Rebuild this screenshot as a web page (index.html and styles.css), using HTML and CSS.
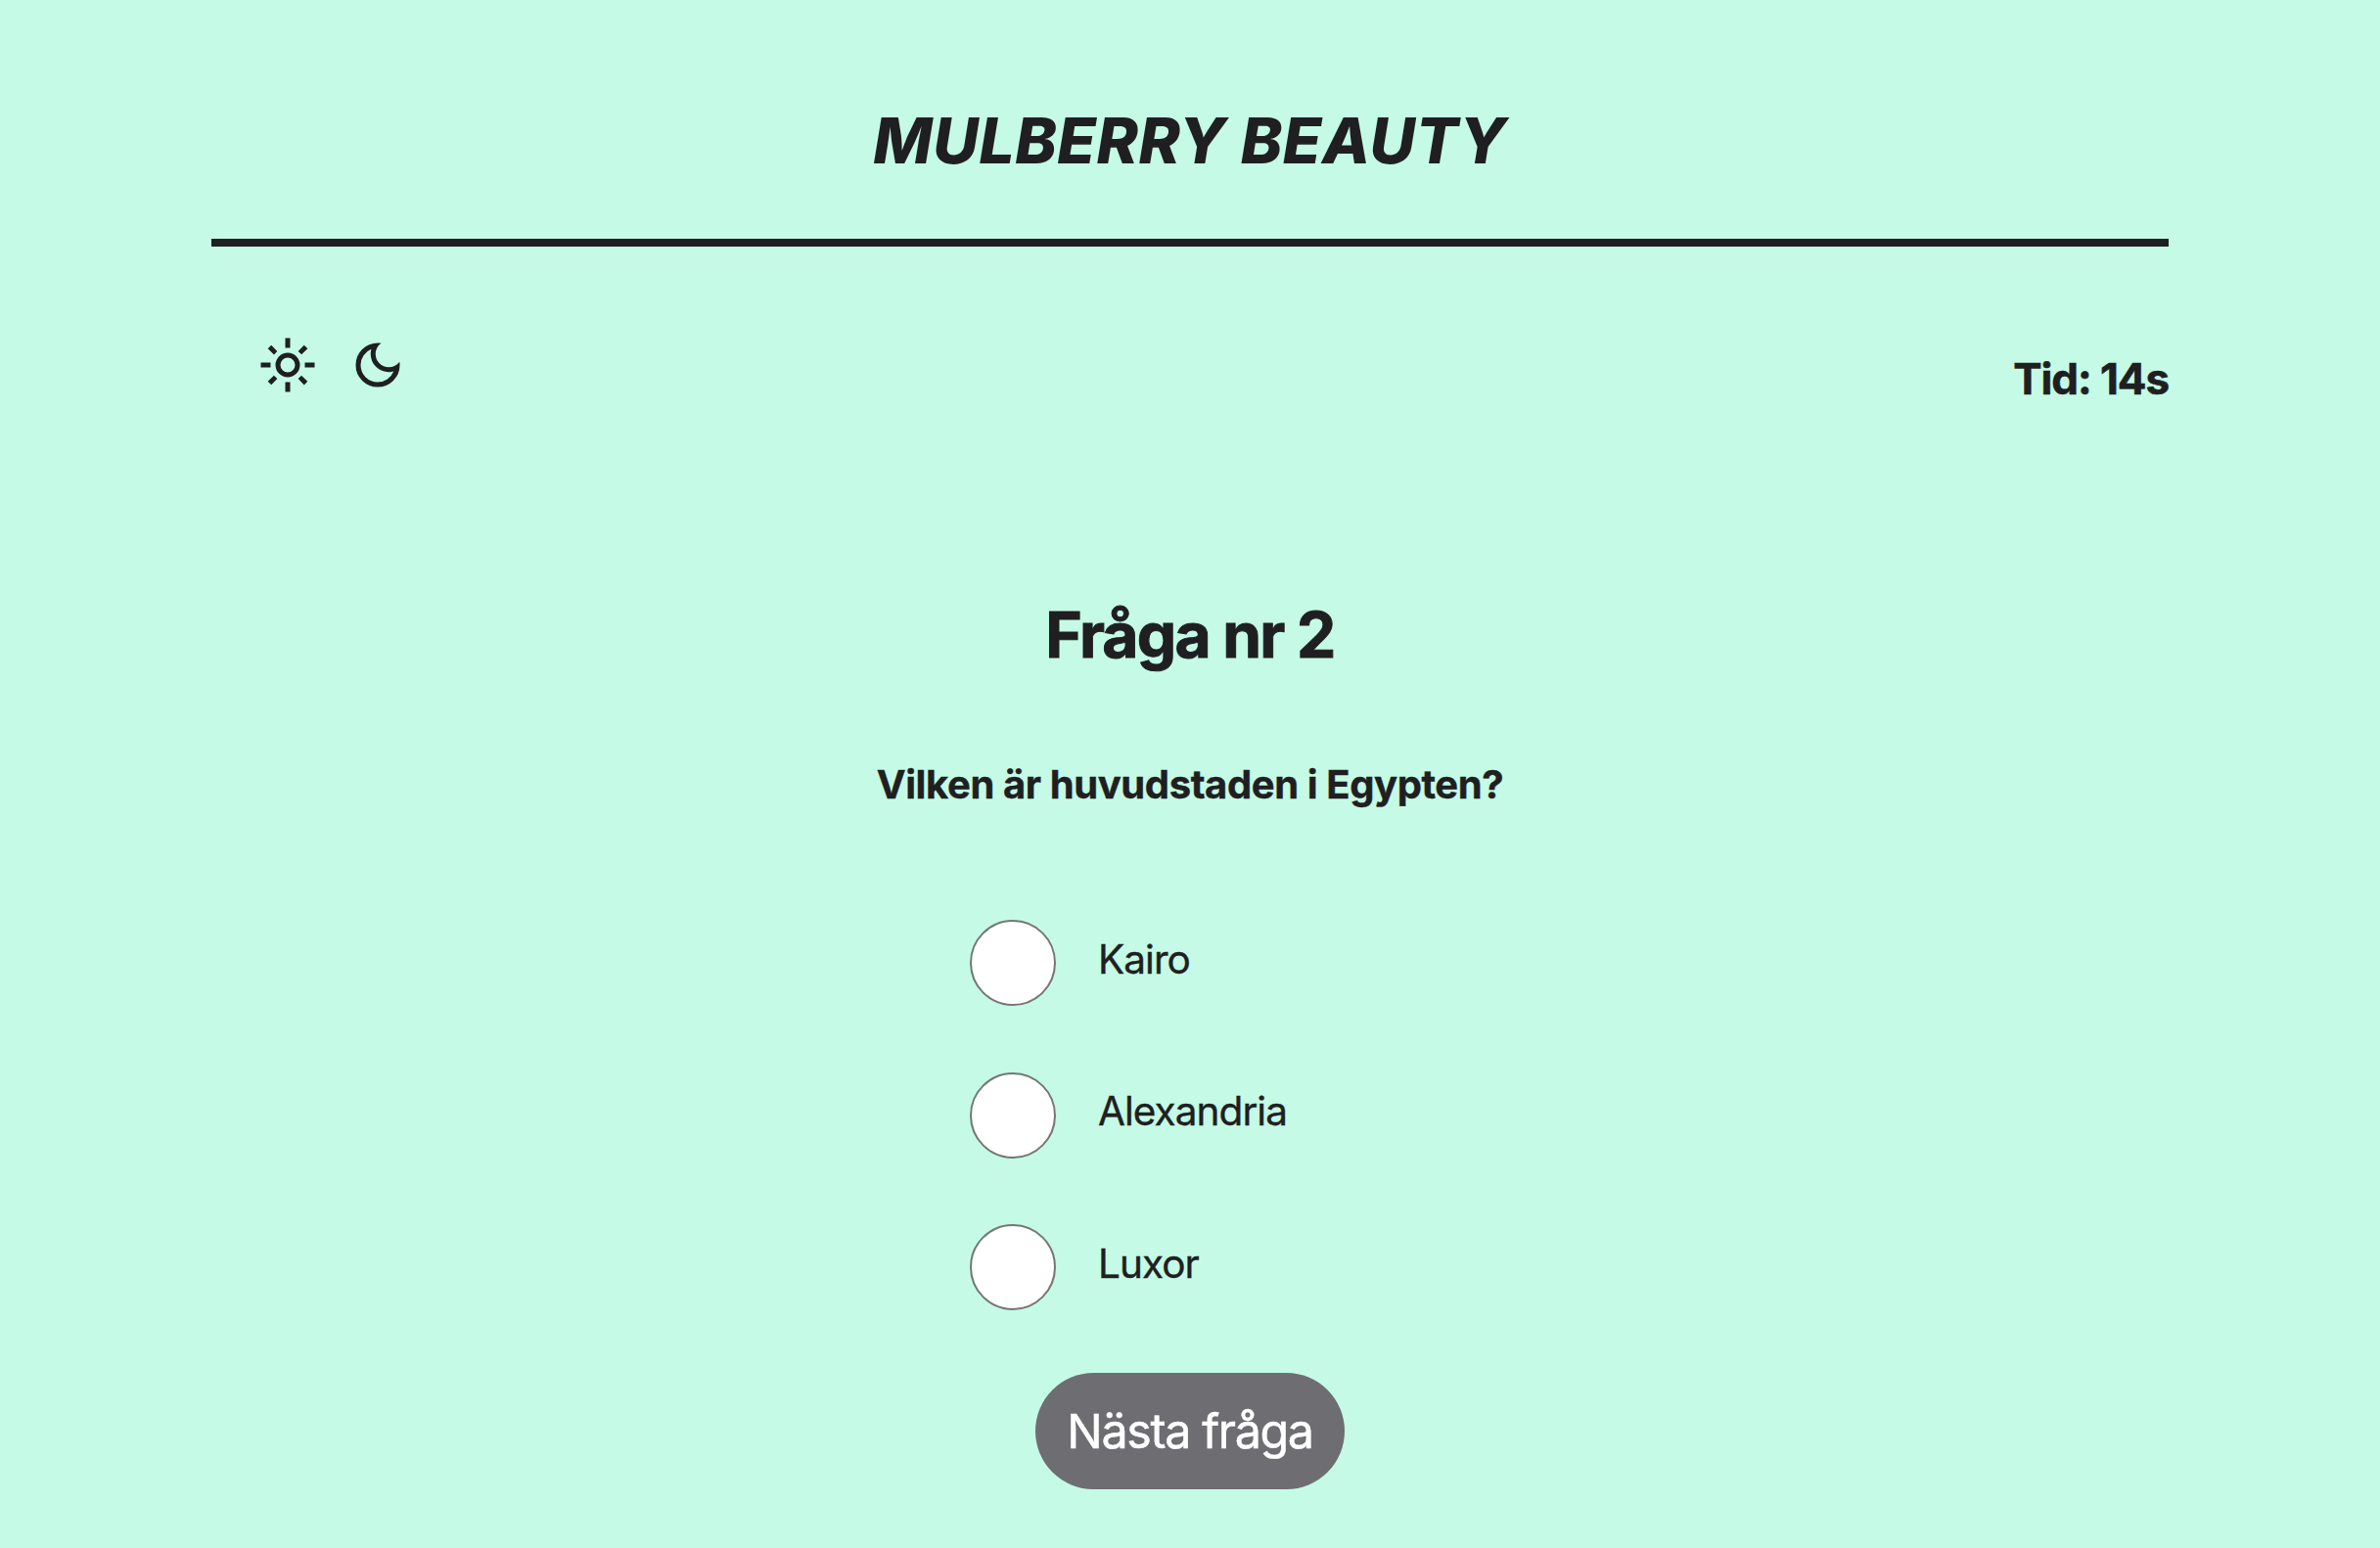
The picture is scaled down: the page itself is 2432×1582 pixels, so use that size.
FILE: index.html
```html
<!DOCTYPE html>
<html lang="sv">
<head>
<meta charset="utf-8">
<title>Mulberry Beauty</title>
<link rel="stylesheet" href="styles.css">
</head>
<body>
<header class="header">
  <h1 class="logo">MULBERRY BEAUTY</h1>
</header>
<main class="main">
  <div class="toolbar">
    <div class="themes">
      <svg class="icon" viewBox="0 0 24 24" role="img" aria-label="Ljust läge"><path d="M12 15q1.25 0 2.125-.875T15 12q0-1.25-.875-2.125T12 9q-1.25 0-2.125.875T9 12q0 1.25.875 2.125T12 15Zm0 2q-2.075 0-3.538-1.463Q7 14.075 7 12t1.462-3.538Q9.925 7 12 7t3.538 1.462Q17 9.925 17 12q0 2.075-1.462 3.537Q14.075 17 12 17ZM1 13v-2h4v2Zm18 0v-2h4v2ZM11 5V1h2v4Zm0 18v-4h2v4ZM6.4 7.75 3.875 5.325 5.3 3.85 7.7 6.35Zm12.3 12.4-2.425-2.525L17.6 16.25l2.525 2.425ZM16.25 6.4l2.425-2.525L20.15 5.3 17.65 7.7ZM3.85 18.7l2.525-2.425L7.75 17.6l-2.425 2.525Z"/></svg>
      <svg class="icon" viewBox="0 0 24 24" role="img" aria-label="Mörkt läge"><path d="M12 21q-3.75 0-6.375-2.625T3 12q0-3.75 2.625-6.375T12 3q.35 0 .688.025.337.025.662.075-1.025.725-1.637 1.887Q11.1 6.15 11.1 7.5q0 2.25 1.575 3.825Q14.25 12.9 16.5 12.9q1.375 0 2.525-.613 1.15-.612 1.875-1.637.05.325.075.662Q21 11.65 21 12q0 3.75-2.625 6.375T12 21Zm0-2q2.2 0 3.95-1.212 1.75-1.213 2.55-3.163-.5.125-1 .2-.5.075-1 .075-3.075 0-5.238-2.162Q9.1 10.575 9.1 7.5q0-.5.075-1t.2-1q-1.95.8-3.163 2.55Q5 9.8 5 12q0 2.9 2.05 4.95Q9.1 19 12 19Z"/></svg>
    </div>
    <p class="timer">Tid: 14s</p>
  </div>
  <h2 class="heading">Fråga nr 2</h2>
  <p class="question">Vilken är huvudstaden i Egypten?</p>
  <div class="options">
    <label class="option"><input class="radio" type="radio" name="answer"><span class="answer">Kairo</span></label>
    <label class="option"><input class="radio" type="radio" name="answer"><span class="answer">Alexandria</span></label>
    <label class="option"><input class="radio" type="radio" name="answer"><span class="answer">Luxor</span></label>
  </div>
  <button class="next" type="button">Nästa fråga</button>
</main>
</body>
</html>
```
FILE: styles.css
```css
* {
  box-sizing: border-box;
  margin: 0;
}

body {
  min-height: 1582px;
  padding: 0 216px;
  background: #c5fbe6;
  color: #1f1f21;
  font-family: Inter, sans-serif;
}

.header {
  height: 252px;
  padding-top: 104px;
  border-bottom: 8px solid #1f1f21;
  text-align: center;
}

.logo {
  font-size: 64px;
  line-height: 80px;
  font-weight: 800;
  font-style: italic;
  letter-spacing: 0.6px;
}

.main {
  display: flex;
  flex-direction: column;
  align-items: center;
}

.toolbar {
  display: flex;
  justify-content: space-between;
  width: 100%;
  margin-top: 91px;
  padding-left: 48px;
}

.themes {
  display: flex;
  gap: 32px;
}

.icon {
  width: 60px;
  height: 60px;
  fill: currentColor;
}

.timer {
  margin-top: 14px;
  font-size: 44px;
  line-height: 60px;
  font-weight: 700;
  letter-spacing: -1.1px;
  -webkit-text-stroke: 0.6px currentColor;
}

.heading {
  margin-top: 192px;
  font-size: 64px;
  line-height: 80px;
  font-weight: 700;
  letter-spacing: -1.75px;
  -webkit-text-stroke: 1px currentColor;
}

.question {
  margin-top: 83px;
  font-size: 40px;
  line-height: 60px;
  font-weight: 700;
  letter-spacing: -0.4px;
  -webkit-text-stroke: 0.4px currentColor;
}

.options {
  display: grid;
  grid-auto-rows: 88px;
  gap: 67.6px;
  width: 450px;
  margin-top: 108px;
}

.option {
  display: flex;
  align-items: flex-start;
  gap: 43px;
}

.radio {
  appearance: none;
  width: 88px;
  height: 88px;
  border: 2px solid #767676;
  border-radius: 50%;
  background: #fff;
}

.answer {
  padding-top: 10.5px;
  font-size: 40.5px;
  line-height: 60px;
  letter-spacing: -0.95px;
  -webkit-text-stroke: 0.4px currentColor;
}

.next {
  width: 316px;
  height: 119px;
  margin-top: 64px;
  border: 0;
  border-radius: 60px;
  background: #6e6d72;
  color: #fff;
  font: 400 48.5px/60px Inter, sans-serif;
  letter-spacing: -1.4px;
  -webkit-text-stroke: 0.5px currentColor;
}
```
